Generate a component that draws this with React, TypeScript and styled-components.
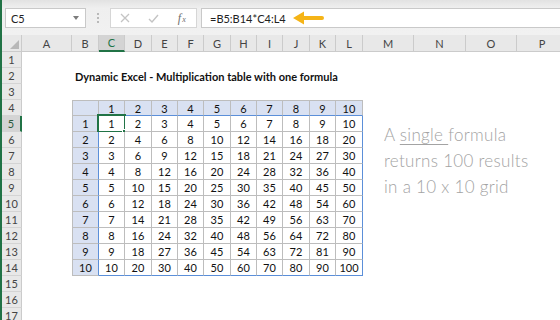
import React from 'react'
import styled, { createGlobalStyle } from 'styled-components'

const GlobalStyle = createGlobalStyle`
  html, body {
    margin: 0;
    padding: 0;
    background: #ffffff;
    overflow: hidden;
  }
  body {
    font-family: Lato, "Liberation Sans", sans-serif;
  }
`

const GREEN = '#217346'
const GRID = '#bdbdbd'
const SPILL = '#5b8fd9'
const HEAD_FILL = '#d9e1f2'

const letters = 'ABCDEFGHIJKLMNOP'.split('')
const colWidths = [50, 27, 26, 27, 26, 26, 27, 26, 26, 27, 26, 27, 51, 52, 51, 51]
const rowCount = 17

const Window = styled.div`
  display: flex;
  width: 560px;
  height: 320px;
  overflow: hidden;
`

const Edge = styled.div`
  width: 2px;
  flex: none;
  background: ${GREEN};
`

const Main = styled.div`
  flex: 1;
  min-width: 0;
  display: flex;
  flex-direction: column;
  overflow: hidden;
`

const FormulaBar = styled.div`
  height: 35px;
  flex: none;
  box-sizing: border-box;
  padding: 8px 0 7px 3px;
  display: flex;
  background: linear-gradient(#e2e2e2 0px, #efefef 8px, #f1f1f1 100%);
`

const Box = styled.div`
  height: 20px;
  box-sizing: border-box;
  background: #ffffff;
  border: 1px solid #c9c9c9;
  display: flex;
  align-items: center;
`

const NameBox = styled(Box)`
  width: 81px;
  padding: 0 6px 0 5px;
  justify-content: space-between;
  font-size: 11px;
  color: #222;
`

const DropArrow = styled.span`
  width: 0;
  height: 0;
  border-left: 3.5px solid transparent;
  border-right: 3.5px solid transparent;
  border-top: 4px solid #7c7c7c;
`

const Grip = styled.div`
  width: 24px;
  display: flex;
  flex-direction: column;
  align-items: center;
  justify-content: center;
  gap: 2px;

  span {
    width: 2px;
    height: 2px;
    background: #b9b9b9;
  }
`

const FxBox = styled(Box)`
  width: 87px;
  border-color: #d6d6d6;
`

const FxSlot = styled.div`
  width: 29px;
  display: flex;
  justify-content: center;
  align-items: center;
`

const FxLabel = styled.span`
  font-family: "Liberation Serif", serif;
  font-style: italic;
  font-size: 12px;
  color: #6e6e6e;

  sub {
    font-size: 8px;
    vertical-align: 0;
    margin-left: 1px;
  }
`

const FormulaInput = styled(Box)`
  flex: 1;
  margin-left: 4px;
  margin-right: -2px;
  padding-left: 8px;
  font-size: 11px;
  color: #222;
  gap: 7px;
`

const Sheet = styled.div`
  display: grid;
  grid-template-columns: 20px ${colWidths.map((w) => `${w}px`).join(' ')};
  grid-template-rows: 17px repeat(${rowCount}, 16px);
  font-size: 11px;
`

const HeadCell = styled.div<{ $active?: boolean }>`
  box-sizing: border-box;
  display: flex;
  align-items: center;
  justify-content: center;
  background: ${(p) => (p.$active ? '#d4d4d4' : '#e8e8e8')};
  color: ${(p) => (p.$active ? GREEN : '#444')};
  border-right: 1px solid #cbcbcb;
  border-bottom: ${(p) => (p.$active ? `2px solid ${GREEN}` : '1px solid #cbcbcb')};
  font-size: 11px;
`

const Corner = styled(HeadCell)`
  position: relative;
  &::after {
    content: '';
    position: absolute;
    right: 2px;
    bottom: 2px;
    width: 0;
    height: 0;
    border-left: 9px solid transparent;
    border-bottom: 9px solid #b8b8b8;
  }
`

const RowHead = styled.div<{ $active?: boolean }>`
  box-sizing: border-box;
  display: flex;
  align-items: center;
  justify-content: center;
  background: ${(p) => (p.$active ? '#d4d4d4' : '#e8e8e8')};
  color: ${(p) => (p.$active ? '#2d5a3d' : '#444')};
  border-right: ${(p) => (p.$active ? `2px solid ${GREEN}` : '1px solid #cbcbcb')};
  border-bottom: 1px solid #d4d4d4;
`

const Cell = styled.div<{
  $fill?: string
  $top?: string
  $left?: string
  $right?: string
  $bottom?: string
}>`
  position: relative;
  box-sizing: border-box;
  display: flex;
  align-items: center;
  justify-content: center;
  background: ${(p) => p.$fill || 'transparent'};
  border-top: ${(p) => (p.$top ? `1px solid ${p.$top}` : 'none')};
  border-left: ${(p) => (p.$left ? `1px solid ${p.$left}` : 'none')};
  border-right: ${(p) => (p.$right ? `1px solid ${p.$right}` : 'none')};
  border-bottom: ${(p) => (p.$bottom ? `1px solid ${p.$bottom}` : 'none')};
  color: #111;
  white-space: nowrap;
`

const Title = styled.div`
  align-self: center;
  justify-self: start;
  padding-left: 3px;
  font-weight: 700;
  white-space: nowrap;
  color: #111;
`

const Selection = styled.div`
  position: absolute;
  top: -2px;
  left: -2px;
  right: -2px;
  bottom: -2px;
  border: 2px solid ${GREEN};
  pointer-events: none;

  &::after {
    content: '';
    position: absolute;
    right: -4px;
    bottom: -4px;
    width: 4px;
    height: 4px;
    background: ${GREEN};
    border: 1px solid #ffffff;
  }
`

const Note = styled.div`
  align-self: start;
  justify-self: start;
  margin: 6px 0 0 21px;
  font-family: Lato, "DejaVu Sans", sans-serif;
  font-weight: 300;
  font-size: 17px;
  line-height: 26px;
  letter-spacing: 0.3px;
  color: #a3a3a3;
  white-space: nowrap;

  u {
    text-decoration-thickness: 1px;
    text-underline-offset: 3px;
  }
`

const CancelIcon = () => (
  <svg width="10" height="10" viewBox="0 0 10 10">
    <path d="M1 1 L9 9 M9 1 L1 9" stroke="#c4c4c4" strokeWidth="1.3" fill="none" />
  </svg>
)

const EnterIcon = () => (
  <svg width="11" height="9" viewBox="0 0 11 9">
    <path d="M1 5 L4 8 L10 1" stroke="#c4c4c4" strokeWidth="1.4" fill="none" />
  </svg>
)

const YellowArrow = () => (
  <svg width="31" height="14" viewBox="0 0 31 14">
    <path d="M0 7 L11 0.5 L11 5 L29 5 Q31 5 31 7 Q31 9 29 9 L11 9 L11 13.5 Z" fill="#f5b417" />
  </svg>
)

function tableCell(r: number, c: number) {
  // c: 0 = A, 1 = B ... 11 = L
  const inTable = r >= 4 && r <= 14 && c >= 1 && c <= 11
  if (!inTable) return null
  const fill = r === 4 || c === 1 ? HEAD_FILL : '#ffffff'
  let right = GRID
  if (r >= 5 && (c === 1 || c === 11)) right = SPILL
  let bottom = GRID
  if (c >= 2 && (r === 4 || r === 14)) bottom = SPILL
  let value = ''
  if (r === 4 && c >= 2) value = String(c - 1)
  else if (c === 1 && r >= 5) value = String(r - 4)
  else if (r >= 5 && c >= 2) value = String((r - 4) * (c - 1))
  return {
    fill,
    right,
    bottom,
    top: r === 4 ? GRID : undefined,
    left: c === 1 ? GRID : undefined,
    value,
  }
}

const App: React.FC = () => {
  const rows = Array.from({ length: rowCount }, (_, i) => i + 1)

  return (
    <>
      <GlobalStyle />
      <Window>
        <Edge />
        <Main>
          <FormulaBar>
            <NameBox>
              <span>C5</span>
              <DropArrow />
            </NameBox>
            <Grip>
              <span />
              <span />
              <span />
            </Grip>
            <FxBox>
              <FxSlot><CancelIcon /></FxSlot>
              <FxSlot><EnterIcon /></FxSlot>
              <FxSlot>
                <FxLabel>f<sub>x</sub></FxLabel>
              </FxSlot>
            </FxBox>
            <FormulaInput>
              <span>=B5:B14*C4:L4</span>
              <YellowArrow />
            </FormulaInput>
          </FormulaBar>

          <Sheet>
            <Corner />
            {letters.map((l) => (
              <HeadCell key={l} $active={l === 'C'}>{l}</HeadCell>
            ))}

            {rows.map((r) => (
              <React.Fragment key={r}>
                <RowHead $active={r === 5}>{r}</RowHead>
                {letters.map((l, c) => {
                  const t = tableCell(r, c)
                  if (r === 2 && c === 1) {
                    return (
                      <Title key={l}>Dynamic Excel - Multiplication table with one formula</Title>
                    )
                  }
                  if (r === 5 && c === 12) {
                    return (
                      <Note key={l}>
                        A <u>single </u>formula
                        <br />
                        returns 100 results
                        <br />
                        in a 10 x 10 grid
                      </Note>
                    )
                  }
                  if (!t) return <Cell key={l} />
                  return (
                    <Cell
                      key={l}
                      $fill={t.fill}
                      $top={t.top}
                      $left={t.left}
                      $right={t.right}
                      $bottom={t.bottom}
                    >
                      {t.value}
                      {r === 5 && c === 2 && <Selection />}
                    </Cell>
                  )
                })}
              </React.Fragment>
            ))}
          </Sheet>
        </Main>
      </Window>
    </>
  )
}

export default App
